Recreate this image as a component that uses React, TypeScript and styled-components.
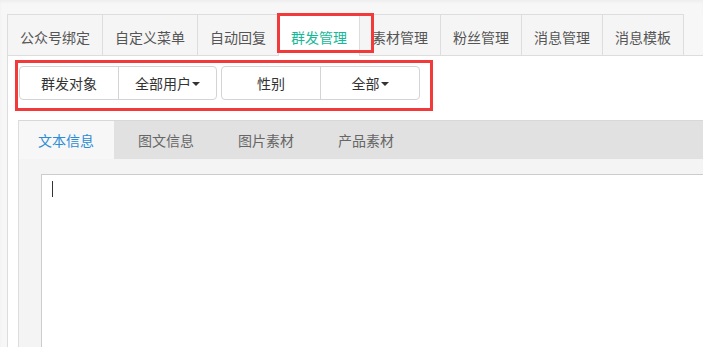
import styled, { createGlobalStyle } from 'styled-components';

const GlobalStyle = createGlobalStyle`
html, body {
    margin: 0;
    padding: 0;
    background: #f7f7f7;
    font-family: "Noto Sans CJK SC", "Noto Sans", sans-serif;
    font-size: 14px;
}
* { box-sizing: border-box; }
`;

const Page = styled.div`
position: relative;
height: 347px;
overflow: hidden;
padding-top: 14px;
box-shadow: inset 0 2px 3px rgba(0, 0, 0, 0.04);
`;

const Panel = styled.div`
margin-left: 7px;
height: 100%;
border-left: 1px solid #dddddd;
background: #ffffff;
display: flex;
flex-direction: column;
`;

const TabBar = styled.div`
display: flex;
height: 42px;
background: #f7f7f7;
border-bottom: 1px solid #dddddd;
`;

const Tab = styled.div<{ active?: boolean }>`
height: ${(p) => (p.active ? '42px' : '41px')};
padding: 3px 12px 0;
display: flex;
align-items: center;
border-top: 1px solid #dddddd;
border-right: 1px solid #dddddd;
background: ${(p) => (p.active ? '#ffffff' : '#f5f5f5')};
color: ${(p) => (p.active ? '#17b897' : '#555555')};
white-space: nowrap;
`;

const FilterBar = styled.div`
display: flex;
gap: 4px;
padding: 10px 0 20px 11px;
`;

const ButtonGroup = styled.div`
display: flex;
height: 34px;
border: 1px solid #d4d4d4;
border-radius: 4px;
background: #ffffff;
`;

const Segment = styled.div<{ width: number }>`
width: ${(p) => p.width}px;
display: flex;
align-items: center;
justify-content: center;
color: #333333;
& + & {
    border-left: 1px solid #d4d4d4;
}
`;

const Caret = styled.span`
display: inline-block;
width: 0;
height: 0;
margin-left: 1px;
margin-top: 2px;
border-top: 4px solid #333333;
border-left: 4px solid transparent;
border-right: 4px solid transparent;
`;

const ContentPanel = styled.div`
flex: 1;
margin-left: 10px;
border-left: 1px solid #dddddd;
display: flex;
flex-direction: column;
`;

const ContentTabs = styled.div`
display: flex;
height: 39px;
border-top: 1px solid #d8d8d8;
background: #e1e1e1;
`;

const ContentTab = styled.div<{ active?: boolean }>`
padding: 0 20px 0 24px;
display: flex;
align-items: center;
background: ${(p) => (p.active ? '#f7f7f7' : 'transparent')};
color: ${(p) => (p.active ? '#2b8cd4' : '#666666')};
&:first-child {
    padding: 0 20px 0 19px;
}
`;

const ContentBody = styled.div`
flex: 1;
display: flex;
background: #f4f4f4;
padding: 15px 0 0 22px;
`;

const Editor = styled.div`
flex: 1;
background: #ffffff;
border: 1px solid #cccccc;
border-right: none;
border-bottom: none;
padding: 6px 10px;
`;

const TextCaret = styled.span`
display: block;
width: 1px;
height: 16px;
background: #333333;
`;

const Annotation = styled.div<{ left: number; top: number; width: number; height: number }>`
position: absolute;
left: ${(p) => p.left}px;
top: ${(p) => p.top}px;
width: ${(p) => p.width}px;
height: ${(p) => p.height}px;
border: 3px solid #f23a3a;
pointer-events: none;
`;

const tabs = ['公众号绑定', '自定义菜单', '自动回复', '群发管理', '素材管理', '粉丝管理', '消息管理', '消息模板'];
const contentTabs = ['文本信息', '图文信息', '图片素材', '产品素材'];

function App() {
    return (
        <Page>
            <GlobalStyle />
            <Panel>
                <TabBar>
                    {tabs.map((t) => (
                        <Tab key={t} active={t === '群发管理'}>{t}</Tab>
                    ))}
                </TabBar>
                <FilterBar>
                    <ButtonGroup>
                        <Segment width={98}>群发对象</Segment>
                        <Segment width={98}>全部用户<Caret /></Segment>
                    </ButtonGroup>
                    <ButtonGroup>
                        <Segment width={98}>性别</Segment>
                        <Segment width={99}>全部<Caret /></Segment>
                    </ButtonGroup>
                </FilterBar>
                <ContentPanel>
                    <ContentTabs>
                        {contentTabs.map((t, i) => (
                            <ContentTab key={t} active={i === 0}>{t}</ContentTab>
                        ))}
                    </ContentTabs>
                    <ContentBody>
                        <Editor>
                            <TextCaret />
                        </Editor>
                    </ContentBody>
                </ContentPanel>
            </Panel>
            <Annotation left={277} top={13} width={97} height={40} />
            <Annotation left={15} top={60} width={418} height={51} />
        </Page>
    );
}

export default App;
